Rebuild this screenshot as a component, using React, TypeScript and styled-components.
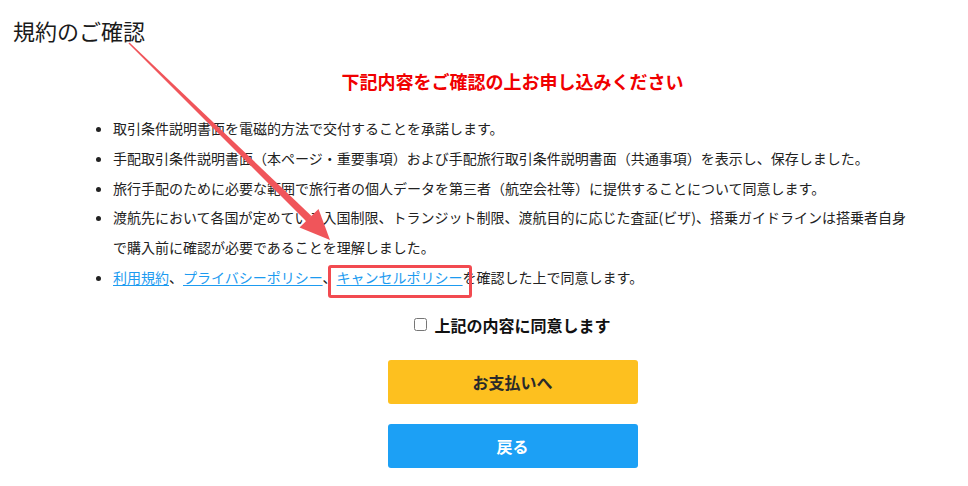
import React from "react";
import styled, { createGlobalStyle } from "styled-components";

const Global = createGlobalStyle`
  html, body { margin: 0; padding: 0; background: #fff; }
  body { font-family: "Noto Sans CJK JP", "Noto Sans", sans-serif; color: #222; }
`;

const Page = styled.div`
  position: relative;
  width: 968px;
  height: 486px;
  overflow: hidden;
  background: #fff;
`;

const Title = styled.h1`
  margin: 0;
  padding: 14px 0 0 13px;
  font-size: 22px;
  line-height: 33px;
  font-weight: 400;
  color: #1a1a1a;
`;

const Content = styled.main`
  width: 849px;
  margin: 0 0 0 88px;
  display: flex;
  flex-direction: column;
  align-items: center;
`;

const Notice = styled.h2`
  margin: 21px 0 0;
  font-size: 18px;
  line-height: 27px;
  font-weight: 700;
  color: #f00000;
`;

const Terms = styled.ul`
  align-self: stretch;
  margin: 19px 0 0;
  padding: 0 24px 0 25px;
  font-size: 14px;
  line-height: 29.8px;
  color: #222;
`;

const Term = styled.li`
  margin: 0;
`;

const TermLink = styled.a`
  color: #1d9bf0;
  text-decoration: underline;
  text-underline-offset: 2px;
`;

const AgreeRow = styled.label`
  margin-top: 20px;
  display: flex;
  align-items: center;
  gap: 7px;
  font-size: 16px;
  line-height: 24px;
  font-weight: 700;
  color: #111;
`;

const Box = styled.input`
  margin: 0;
  width: 13px;
  height: 13px;
`;

const Button = styled.button<{ $variant: "pay" | "back" }>`
  width: 250px;
  height: 44px;
  margin-top: ${(p) => (p.$variant === "pay" ? "23px" : "20px")};
  border: none;
  border-radius: 3px;
  font-family: inherit;
  font-size: 16px;
  font-weight: 700;
  background: ${(p) => (p.$variant === "pay" ? "#fdc01f" : "#1ca0f5")};
  color: ${(p) => (p.$variant === "pay" ? "#2a2a2a" : "#fff")};
  cursor: pointer;
`;

const Highlight = styled.div`
  position: absolute;
  left: 328px;
  top: 265px;
  width: 138px;
  height: 27px;
  border: 3px solid #f24a50;
  border-radius: 3px;
  pointer-events: none;
`;

const Overlay = styled.svg`
  position: absolute;
  left: 0;
  top: 0;
  pointer-events: none;
`;

export default function App() {
  return (
    <Page>
      <Global />
      <Title>規約のご確認</Title>
      <Content>
        <Notice>下記内容をご確認の上お申し込みください</Notice>
        <Terms>
          <Term>取引条件説明書面を電磁的方法で交付することを承諾します。</Term>
          <Term>
            手配取引条件説明書面（本ページ・重要事項）および手配旅行取引条件説明書面（共通事項）を表示し、保存しました。
          </Term>
          <Term>
            旅行手配のために必要な範囲で旅行者の個人データを第三者（航空会社等）に提供することについて同意します。
          </Term>
          <Term>
            渡航先において各国が定めている入国制限、トランジット制限、渡航目的に応じた査証(ビザ)、搭乗ガイドラインは搭乗者自身で購入前に確認が必要であることを理解しました。
          </Term>
          <Term>
            <TermLink href="#">利用規約</TermLink>、
            <TermLink href="#">プライバシーポリシー</TermLink>、
            <TermLink href="#">キャンセルポリシー</TermLink>
            を確認した上で同意します。
          </Term>
        </Terms>
        <AgreeRow>
          <Box type="checkbox" />
          上記の内容に同意します
        </AgreeRow>
        <Button $variant="pay">お支払いへ</Button>
        <Button $variant="back">戻る</Button>
      </Content>
      <Highlight />
      <Overlay width="968" height="486" viewBox="0 0 968 486">
        <polygon
          points="129.5,42.5 128.5,43.5 306.5,221.5 311.5,216"
          fill="#f0555a"
        />
        <polygon points="330,240 318.5,209 299.5,227.5" fill="#f0555a" />
      </Overlay>
    </Page>
  );
}
